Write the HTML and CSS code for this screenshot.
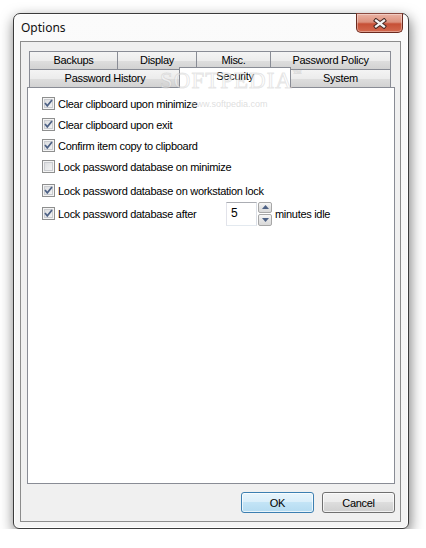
FILE: index.html
```
<!DOCTYPE html>
<html lang="en">
<head>
    <meta charset="UTF-8">
    <title>Options</title>
    <link rel="stylesheet" href="styles.css">
</head>
<body>
    <div class="window">
        <div class="titlebar">
            <span class="title">Options</span>
            <span class="close">
                <svg width="14" height="11" viewBox="0 0 14 11">
                    <path d="M3 2.5 L11 8.5 M11 2.5 L3 8.5" stroke="#4a2a24" stroke-width="4.2" stroke-linecap="square" fill="none"/>
                    <path d="M3 2.5 L11 8.5 M11 2.5 L3 8.5" stroke="#f4f4f4" stroke-width="2.2" stroke-linecap="square" fill="none"/>
                </svg>
            </span>
        </div>
        <div class="client">
            <div class="tabs">
                <div class="tab-row">
                    <div class="tab tab-backups">Backups</div>
                    <div class="tab tab-display">Display</div>
                    <div class="tab tab-misc">Misc.</div>
                    <div class="tab tab-policy">Password Policy</div>
                </div>
                <div class="tab-row">
                    <div class="tab tab-history">Password History</div>
                    <div class="tab tab-security selected">Security</div>
                    <div class="tab tab-system">System</div>
                </div>
            </div>
            <div class="panel">
                <div class="option">
                    <span class="check"><svg width="11" height="11" viewBox="0 0 11 11"><path d="M2 5 L4.3 7.8 L9 2" stroke="#4d6185" stroke-width="1.7" fill="none"/></svg></span>
                    <span>Clear clipboard upon minimize</span>
                </div>
                <div class="option">
                    <span class="check"><svg width="11" height="11" viewBox="0 0 11 11"><path d="M2 5 L4.3 7.8 L9 2" stroke="#4d6185" stroke-width="1.7" fill="none"/></svg></span>
                    <span>Clear clipboard upon exit</span>
                </div>
                <div class="option">
                    <span class="check"><svg width="11" height="11" viewBox="0 0 11 11"><path d="M2 5 L4.3 7.8 L9 2" stroke="#4d6185" stroke-width="1.7" fill="none"/></svg></span>
                    <span>Confirm item copy to clipboard</span>
                </div>
                <div class="option">
                    <span class="check"></span>
                    <span>Lock password database on minimize</span>
                </div>
                <div class="option spaced">
                    <span class="check"><svg width="11" height="11" viewBox="0 0 11 11"><path d="M2 5 L4.3 7.8 L9 2" stroke="#4d6185" stroke-width="1.7" fill="none"/></svg></span>
                    <span>Lock password database on workstation lock</span>
                </div>
                <div class="option idle-row">
                    <span class="check"><svg width="11" height="11" viewBox="0 0 11 11"><path d="M2 5 L4.3 7.8 L9 2" stroke="#4d6185" stroke-width="1.7" fill="none"/></svg></span>
                    <span class="idle-label">Lock password database after</span>
                    <span class="num">5</span>
                    <span class="spin">
                        <span><svg width="7" height="4" viewBox="0 0 7 4"><path d="M0 4 L3.5 0 L7 4 Z" fill="#4d6185"/></svg></span>
                        <span><svg width="7" height="4" viewBox="0 0 7 4"><path d="M0 0 L3.5 4 L7 0 Z" fill="#4d6185"/></svg></span>
                    </span>
                    <span class="units">minutes idle</span>
                </div>
            </div>
            <div class="buttons">
                <button class="btn default">OK</button>
                <button class="btn">Cancel</button>
            </div>
        </div>
        <span class="watermark">SOFTPEDIA<sup>&trade;</sup></span>
        <span class="watermark-url">www.softpedia.com</span>
    </div>
</body>
</html>
```

FILE: styles.css
```
* {
    box-sizing: border-box;
}

body {
    margin: 0;
    background-color: #fff;
    font-family: "Liberation Sans", Arial, sans-serif;
    font-size: 11px;
    letter-spacing: -0.3px;
    color: #000;
}

.window {
    position: relative;
    width: 396px;
    height: 516px;
    margin: 13px 0 0 13px;
    padding: 0 7px 6px 6px;
    border: 1px solid #3b3b3b;
    border-radius: 7px 7px 6px 6px;
    background: linear-gradient(#fbfbfb, #f4f4f4);
    box-shadow: inset 0 0 0 1px rgba(255, 255, 255, 0.9), 1px 5px 14px rgba(0, 0, 0, 0.55);
    display: flex;
    flex-direction: column;
}

.titlebar {
    height: 27px;
    display: flex;
    align-items: flex-start;
}

.title {
    flex: 1;
    margin: 6px 0 0 1px;
    font-family: "Noto Sans", "Open Sans", sans-serif;
    font-size: 12px;
    line-height: 16px;
    letter-spacing: 0;
    color: #111;
}

.close {
    width: 47px;
    height: 20px;
    margin: -1px -2px 0 0;
    border: 1px solid #6b2a1f;
    border-top-color: #8a4a40;
    border-radius: 0 0 5px 5px;
    background: linear-gradient(#eab2a3, #dc917d 45%, #c65036 55%, #d46a4f);
    box-shadow: inset 0 0 0 1px rgba(255, 255, 255, 0.35);
    display: flex;
    align-items: center;
    justify-content: center;
}

.client {
    flex: 1;
    border: 1px solid #8c8c8c;
    background-color: #f0f0f0;
    padding: 9px 5px 8px 6px;
    display: flex;
    flex-direction: column;
}

.tabs {
    padding-left: 2px;
}

.tab-row {
    display: flex;
    align-items: flex-start;
    height: 18px;
}

.tab {
    height: 18px;
    margin-left: -1px;
    border: 1px solid #898c95;
    border-bottom: none;
    background: linear-gradient(#f4f4f4, #ececec 50%, #dedede 50%, #d2d2d2);
    text-align: center;
    line-height: 16px;
}

.tab:first-child {
    margin-left: 0;
}

.tab-backups { width: 89px; }
.tab-display { width: 80px; }
.tab-misc { width: 75px; }
.tab-policy { width: 121px; }
.tab-history { width: 152px; }
.tab-security { width: 112px; }
.tab-system { width: 101px; }

.tab.selected {
    position: relative;
    z-index: 1;
    height: 21px;
    margin-top: -2px;
    margin-left: -2px;
    background: #fff;
    line-height: 16px;
}

.panel {
    height: 397px;
    border: 1px solid #898c95;
    background-color: #fff;
    padding: 5px 0 0 14px;
}

.option {
    display: flex;
    align-items: center;
    height: 21px;
}

.option.spaced {
    margin-top: 3px;
}

.option.idle-row {
    height: 25px;
}

.check {
    width: 13px;
    height: 13px;
    margin-right: 3px;
    border: 1px solid #8e8f8f;
    background: linear-gradient(135deg, #d6d8db, #f8f8f8);
    box-shadow: inset 0 0 0 1px #f4f4f4, inset 0 0 0 2px #c9cbcf;
    display: flex;
    align-items: center;
    justify-content: center;
}

.idle-label {
    width: 168px;
}

.num {
    width: 31px;
    height: 24px;
    padding: 3px 0 0 4px;
    border: 1px solid;
    border-color: #abadb3 #dbdfe6 #e3e9ef #e2e3ea;
    background-color: #fff;
    font-size: 12px;
}

.spin {
    width: 14px;
    height: 24px;
    margin-left: 1px;
    display: flex;
    flex-direction: column;
    gap: 1px;
}

.spin span {
    flex: 1;
    border: 1px solid #a7a7a7;
    border-radius: 2px;
    background: linear-gradient(#f7f7f7, #e4e4e4 50%, #d9d9d9);
    display: flex;
    align-items: center;
    justify-content: center;
}

.units {
    margin-left: 3px;
}

.buttons {
    display: flex;
    justify-content: flex-end;
    gap: 8px;
    margin-top: 8px;
}

.btn {
    width: 73px;
    height: 21px;
    padding: 0;
    border: 1px solid #707070;
    border-radius: 3px;
    background: linear-gradient(#f2f2f2, #ebebeb 50%, #dddddd 50%, #cfcfcf);
    box-shadow: inset 0 0 0 1px rgba(255, 255, 255, 0.7);
    font-family: inherit;
    font-size: 11px;
    letter-spacing: -0.3px;
    color: #000;
}

.btn.default {
    border-color: #3c7fb1;
    background: linear-gradient(#e8f5fc, #d9eefa 50%, #c3e4f6 50%, #b4dbf1);
}

.watermark {
    position: absolute;
    left: 146px;
    top: 54px;
    z-index: 2;
    font-family: "Liberation Serif", serif;
    font-size: 23px;
    letter-spacing: 1px;
    color: rgba(255, 255, 255, 0.55);
    -webkit-text-stroke: 1px rgba(170, 170, 170, 0.3);
    pointer-events: none;
}

.watermark sup {
    font-size: 9px;
    vertical-align: top;
}

.watermark-url {
    position: absolute;
    left: 176px;
    top: 85px;
    z-index: 2;
    font-size: 9px;
    letter-spacing: 0;
    color: rgba(200, 200, 200, 0.6);
    pointer-events: none;
}
```
